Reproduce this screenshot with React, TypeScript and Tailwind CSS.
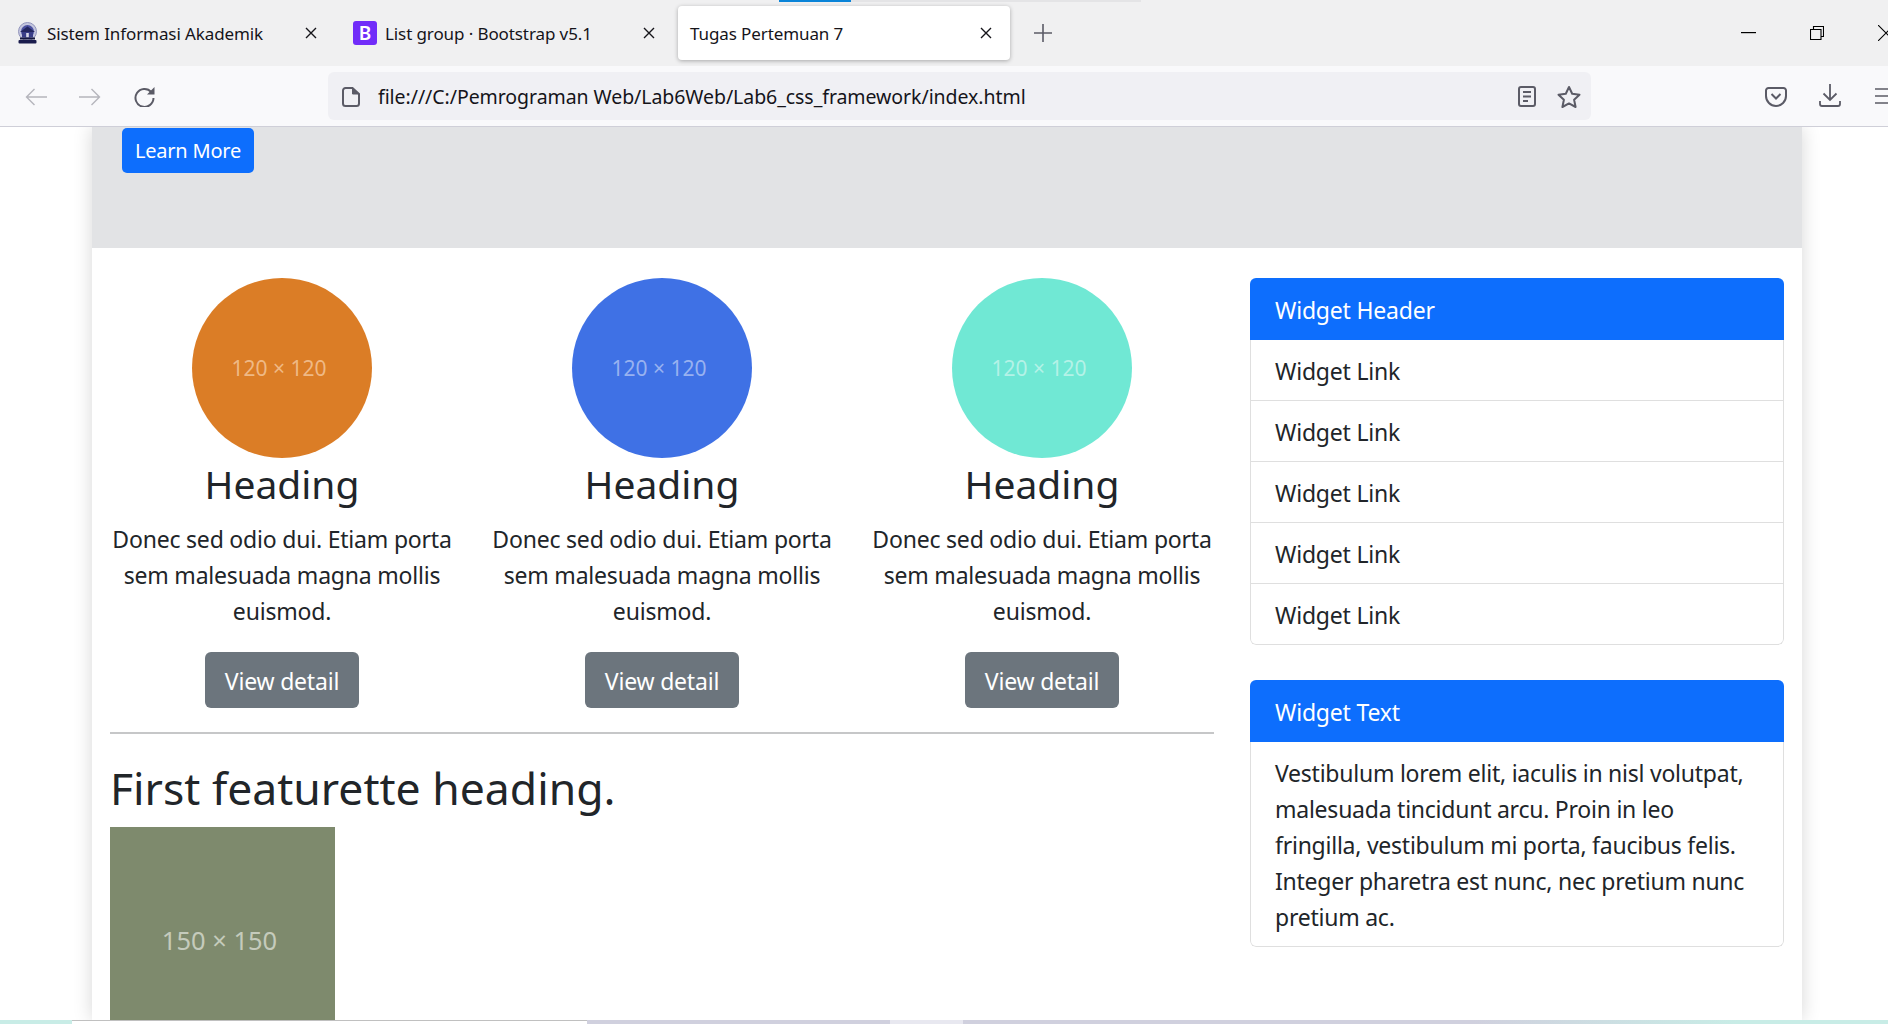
import type { ReactNode } from "react";

const sans = "font-['Noto_Sans','Open_Sans',sans-serif]";

const columns = [
  { id: 1, bg: "bg-[#db7d26]", label: "text-[#efb985]" },
  { id: 2, bg: "bg-[#3f71e5]", label: "text-[#98b2f0]" },
  { id: 3, bg: "bg-[#70e8d4]", label: "text-[#b4f2e7]" },
];

function CloseGlyph() {
  return (
    <svg width="12" height="12" viewBox="0 0 12 12" className="shrink-0 text-[#15141a]">
      <path d="M1 1l10 10M11 1L1 11" stroke="currentColor" strokeWidth="1.4" fill="none" />
    </svg>
  );
}

function SealIcon() {
  return (
    <svg width="21" height="22" viewBox="0 0 21 22" className="shrink-0">
      <circle cx="10.5" cy="9.5" r="9" fill="#c4c6de" stroke="#9295bd" strokeWidth="1" />
      <circle cx="10.5" cy="9.5" r="6.5" fill="#4a4f9e" />
      <path d="M3 10l7.5-5.5L18 10z" fill="#23265f" />
      <rect x="5" y="10" width="11" height="5.5" fill="#3a3e88" />
      <rect x="9.2" y="11" width="2.6" height="4.5" fill="#d8d9e8" />
      <rect x="3" y="15.5" width="15" height="2" fill="#15173f" />
      <rect x="1.5" y="18" width="18" height="3.5" rx="1" fill="#1a1c4d" />
    </svg>
  );
}

function Tab({
  icon,
  title,
  active,
  className,
}: {
  icon?: ReactNode;
  title: string;
  active?: boolean;
  className: string;
}) {
  return (
    <div
      className={`flex items-center h-[54px] shrink-0 ${className} ${
        active ? "bg-white rounded-[4px] shadow-[0_1px_4px_rgba(0,0,0,0.3)]" : ""
      }`}
    >
      {icon}
      <span className="pt-[2px] text-[17px] tracking-[-0.1px] text-[#15141a] whitespace-nowrap flex-1">{title}</span>
      <CloseGlyph />
    </div>
  );
}

function TabBar() {
  return (
    <div className="relative h-[66px] bg-[#f0f0f1] flex items-start pt-[6px] shrink-0">
      <div className="absolute left-[779px] top-0 w-[72px] h-[2px] bg-[#0a84d8]" />
      <div className="absolute left-[851px] top-0 w-[290px] h-[2px] bg-[#e4e4e6]" />
      <Tab
        className="w-[321px] pl-[17px] pr-[4px]"
        title="Sistem Informasi Akademik"
        icon={
          <span className="mr-[9px]">
            <SealIcon />
          </span>
        }
      />
      <Tab
        className="w-[355px] pl-[32px] pr-[21px]"
        title="List group · Bootstrap v5.1"
        icon={
          <span className="w-[24px] h-[24px] mr-[8px] rounded-[3px] bg-[#712cf9] text-white text-[19px] font-semibold flex items-center justify-center shrink-0 leading-none">
            B
          </span>
        }
      />
      <Tab active className="w-[332px] ml-[2px] pl-[12px] pr-[18px]" title="Tugas Pertemuan 7" />
      <svg width="20" height="20" viewBox="0 0 20 20" className="ml-[23px] mt-[17px] text-[#5b5b66]">
        <path d="M10 1v18M1 10h18" stroke="currentColor" strokeWidth="1.6" fill="none" />
      </svg>
      <div className="flex-1" />
      <div className="flex items-center h-[54px] text-black">
        <svg width="15" height="2" viewBox="0 0 15 2" className="mr-[54px]">
          <rect width="15" height="1.2" fill="currentColor" />
        </svg>
        <svg width="14" height="14" viewBox="0 0 14 14" className="mr-[54px]">
          <path d="M.5 3.5h10.5v10H.5zM3.5 3.5V.5h10v10h-2.5" stroke="currentColor" strokeWidth="1.1" fill="none" />
        </svg>
        <svg width="16" height="16" viewBox="0 0 16 16" className="-mr-[6px]">
          <path d="M0 0l16 16M16 0L0 16" stroke="currentColor" strokeWidth="1.1" fill="none" />
        </svg>
      </div>
    </div>
  );
}

function ToolbarIcon({ children, w = 24, h = 24, className = "" }: { children: ReactNode; w?: number; h?: number; className?: string }) {
  return (
    <svg width={w} height={h} viewBox={`0 0 ${w} ${h}`} fill="none" stroke="currentColor" strokeWidth="2" className={`shrink-0 ${className}`}>
      {children}
    </svg>
  );
}

function Toolbar() {
  return (
    <div className="h-[61px] bg-[#f9f9fb] border-b border-[#cfcfd8] flex items-center shrink-0 overflow-hidden text-[#5b5b66]">
      <ToolbarIcon className="ml-[25px] mt-[2px] text-[#b5b5bc]" w={22} h={20}>
        <path d="M22 10H1.5M9.5 2l-8 8 8 8" strokeWidth="1.4" />
      </ToolbarIcon>
      <ToolbarIcon className="ml-[32px] mt-[2px] text-[#b5b5bc]" w={22} h={20}>
        <path d="M0 10h20.5M12.5 2l8 8-8 8" strokeWidth="1.4" />
      </ToolbarIcon>
      <ToolbarIcon className="ml-[32px] mt-[2px]" w={22} h={20}>
        <path d="M18.3 5A9 9 0 1 0 20.5 11" />
        <path d="M21.5 0v7.5h-7.5z" fill="currentColor" stroke="none" />
      </ToolbarIcon>
      <div className="ml-[173px] w-[1263px] shrink-0 h-[48px] bg-[#f0f0f4] rounded-[6px] flex items-center pl-[14px] pr-[10px]">
        <ToolbarIcon w={18} h={20} className="mt-[2px]">
          <path d="M1 3.5a2.5 2.5 0 0 1 2.5-2.5h7L17 7v9.5a2.5 2.5 0 0 1-2.5 2.5h-11A2.5 2.5 0 0 1 1 16.5z" />
          <path d="M10.5 1v6H17z" fill="currentColor" stroke="currentColor" strokeWidth="1" />
        </ToolbarIcon>
        <span className="ml-[18px] pt-[1px] text-[19.5px] tracking-[-0.06px] text-[#15141a] whitespace-nowrap flex-1">
          file:///C:/Pemrograman Web/Lab6Web/Lab6_css_framework/index.html
        </span>
        <ToolbarIcon w={18} h={21} className="mr-[20px] mt-[1px]">
          <rect x="1" y="1" width="16" height="19" rx="2" />
          <path d="M5 6h8M5 10.5h8M5 15h5" />
        </ToolbarIcon>
        <ToolbarIcon w={26} h={24} className="mr-[-1px] mt-[1px]">
          <path d="M13 2l3.2 6.8 7.3.9-5.4 5 1.5 7.3L13 18.4 6.4 22l1.5-7.3-5.4-5 7.3-.9z" strokeLinejoin="round" />
        </ToolbarIcon>
      </div>
      <ToolbarIcon w={22} h={20} className="ml-[174px] mt-[2px]">
        <path d="M3.5 1h15A2.5 2.5 0 0 1 21 3.5V9a10 10 0 0 1-20 0V3.5A2.5 2.5 0 0 1 3.5 1z" />
        <path d="M6.5 7l4.5 4.5L15.5 7" />
      </ToolbarIcon>
      <ToolbarIcon w={22} h={24} className="ml-[32px]">
        <path d="M11 0v16M4.5 9.5l6.5 6.5 6.5-6.5M1 17v3a2 2 0 0 0 2 2h16a2 2 0 0 0 2-2v-3" strokeWidth="1.8" />
      </ToolbarIcon>
      <ToolbarIcon w={20} h={18} className="ml-[34px]">
        <path d="M0 2h20M0 9h20M0 16h20" strokeWidth="1.7" />
      </ToolbarIcon>
    </div>
  );
}

function FeatureColumn({ bg, label }: { bg: string; label: string }) {
  return (
    <div className="w-[380px] shrink-0 flex flex-col items-center text-center">
      <div className={`w-[180px] h-[180px] rounded-full ${bg} ${label} flex items-center justify-center pr-[6px] pt-[2px] text-[21px]`}>
        120 × 120
      </div>
      <h2 className="text-[39px] leading-[50px] mt-[1px] text-[#212529]">Heading</h2>
      <p className="mt-[12px] px-[18px] text-[23px] leading-[36px] tracking-[-0.2px] text-[#212529]">
        Donec sed odio dui. Etiam porta sem malesuada magna mollis euismod.
      </p>
      <button className="mt-[23px] w-[154px] h-[56px] pt-[2px] rounded-[6px] bg-[#6c757d] text-white text-[23px] tracking-[-0.2px]">
        View detail
      </button>
    </div>
  );
}

function Widget({ title, children }: { title: string; children: ReactNode }) {
  return (
    <div className="rounded-[6px] overflow-hidden bg-white">
      <div className="h-[62px] bg-[#0d6efd] text-white text-[23px] tracking-[-0.2px] flex items-center pl-[25px] pt-[2px]">
        {title}
      </div>
      <div className="border border-t-0 border-[#dfdfdf] rounded-b-[6px]">{children}</div>
    </div>
  );
}

export default function App() {
  return (
    <div className={`h-screen flex flex-col overflow-hidden bg-white text-[#212529] ${sans}`}>
      <TabBar />
      <Toolbar />
      <div className="flex-1 min-h-0 overflow-hidden">
        <div className="ml-[92px] w-[1710px] h-full bg-white shadow-[0_0_18px_rgba(0,0,0,0.16)]">
          <div className="h-[121px] bg-[#e2e3e5] pl-[30px] pt-px">
            <button className="w-[132px] h-[45px] pt-[1px] rounded-[5px] bg-[#0d6efd] text-white text-[20px] tracking-[-0.2px]">
              Learn More
            </button>
          </div>
          <div className="flex">
            <div className="w-[1140px] shrink-0 pt-[30px]">
              <div className="flex">
                {columns.map((c) => (
                  <FeatureColumn key={c.id} bg={c.bg} label={c.label} />
                ))}
              </div>
              <div className="mx-[18px]">
                <hr className="mt-[24px] border-t-2 border-[#c6c7c8]" />
                <h2 className="mt-[25px] text-[44.5px] leading-[58px] text-[#212529]">First featurette heading.</h2>
                <div className="mt-[10px] w-[225px] h-[225px] bg-[#7e8a6d] text-[#c5cbbc] text-[25.5px] flex items-center justify-center pr-[6px] pt-[2px]">
                  150 × 150
                </div>
              </div>
            </div>
            <div className="w-[570px] shrink-0 px-[18px] pt-[30px] flex flex-col gap-[35px]">
              <Widget title="Widget Header">
                {[1, 2, 3, 4, 5].map((n) => (
                  <div
                    key={n}
                    className={`flex items-center pl-[24px] pt-[2px] text-[23px] tracking-[-0.2px] ${
                      n < 5 ? "h-[61px] border-b border-[#dfdfdf]" : "h-[60px]"
                    }`}
                  >
                    Widget Link
                  </div>
                ))}
              </Widget>
              <Widget title="Widget Text">
                <p className="px-[24px] pt-[13px] pb-[11px] text-[23px] leading-[36px] tracking-[-0.24px]">
                  Vestibulum lorem elit, iaculis in nisl volutpat, malesuada tincidunt arcu. Proin in leo fringilla,
                  vestibulum mi porta, faucibus felis. Integer pharetra est nunc, nec pretium nunc pretium ac.
                </p>
              </Widget>
            </div>
          </div>
        </div>
      </div>
      <div className="h-[4px] flex shrink-0 bg-[linear-gradient(90deg,#d0d0de_0%,#d0d0de_78%,#c8ece6_92%)]">
        <div className="w-[72px] bg-[#c8ece6]" />
        <div className="w-[515px] bg-white border-t border-[#c0c0c0]" />
        <div className="ml-[303px] w-[73px] bg-[#e8e8f0]" />
      </div>
    </div>
  );
}
